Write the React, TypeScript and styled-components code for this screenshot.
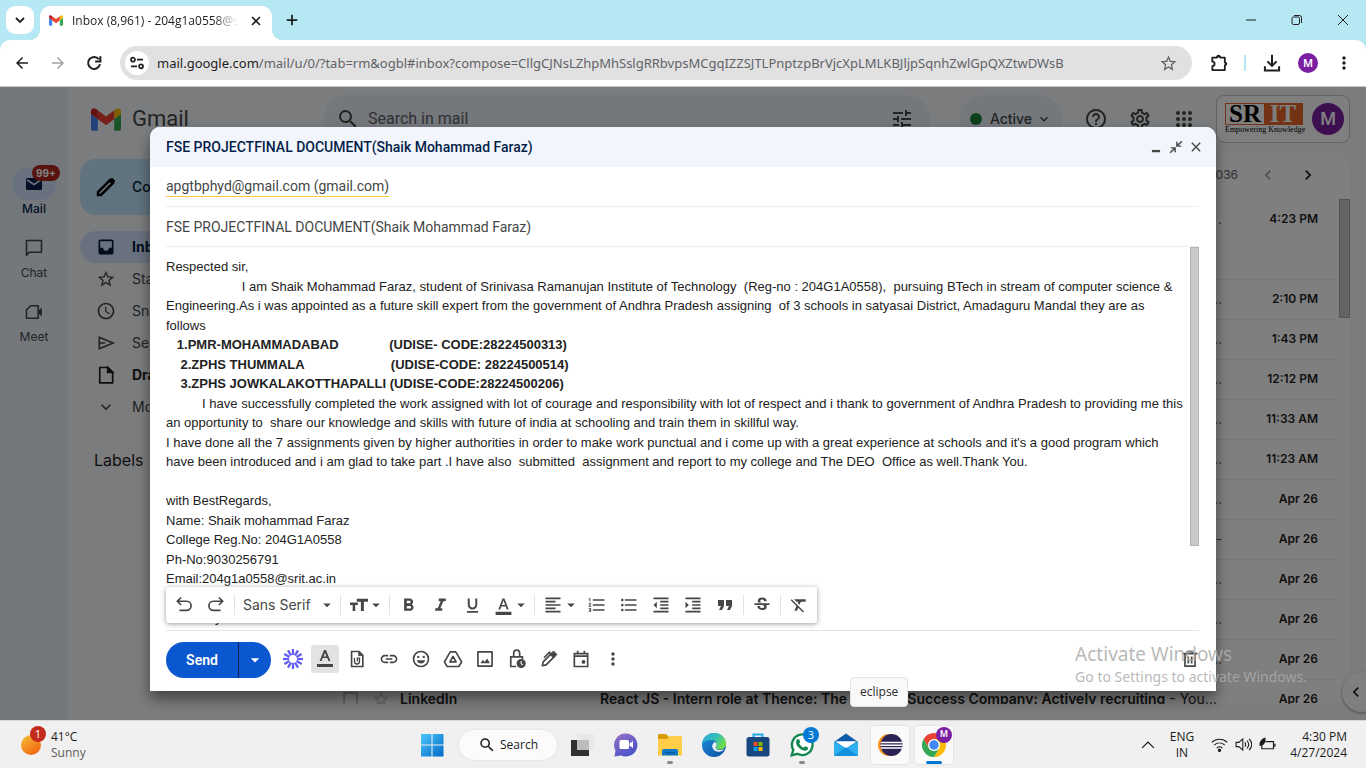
import React from "react";
import styled, { createGlobalStyle, css } from "styled-components";
import {
  MdAccessTime,
  MdArrowBack,
  MdArrowDropDown,
  MdArrowForward,
  MdChevronLeft,
  MdChevronRight,
  MdClose,
  MdExpandMore,
  MdFormatAlignLeft,
  MdFormatBold,
  MdFormatClear,
  MdFormatColorText,
  MdFormatIndentDecrease,
  MdFormatIndentIncrease,
  MdFormatItalic,
  MdFormatListBulleted,
  MdFormatListNumbered,
  MdFormatQuote,
  MdFormatUnderlined,
  MdHelpOutline,
  MdInsertLink,
  MdMoreVert,
  MdOutlineSettings,
  MdRefresh,
  MdSearch,
  MdStarBorder,
  MdStrikethroughS,
  MdTune,
} from "react-icons/md";

const google = `Inter, Roboto, "Liberation Sans", sans-serif`;
const product = `Roboto, "Liberation Sans", sans-serif`;
const system = `"Open Sans", "Noto Sans", sans-serif`;
const systemWide = `"Noto Sans", "Open Sans", sans-serif`;

const Global = createGlobalStyle`
  *, *::before, *::after { box-sizing: border-box; }
  body { margin: 0; font-family: ${product}; }
  button, input, select { font: inherit; color: inherit; }
  svg { display: block; flex: none; }
`;

const Screen = styled.div`
  position: relative;
  display: flex;
  flex-direction: column;
  height: 100vh;
  overflow: hidden;
  background: #b5e8f2;
`;

/* ---------- browser chrome ---------- */

const plainButton = css`
  display: flex;
  align-items: center;
  justify-content: center;
  flex: none;
  padding: 0;
  border: 0;
  background: none;
`;

const TabStrip = styled.header`
  display: flex;
  height: 40px;
  padding-left: 6px;
  font: 12px/16px ${system};
  color: #1f1f1f;
`;

const TabSearch = styled.button`
  ${plainButton}
  width: 28px;
  height: 28px;
  margin-top: 6px;
  border-radius: 9px;
  background: #fff;
`;

const Tab = styled.div`
  position: relative;
  display: flex;
  align-items: center;
  width: 232px;
  height: 34px;
  margin: 6px 0 0 6px;
  padding: 0 6px 5px 9px;
  border-radius: 10px 10px 0 0;
  background: #fff;
  &::before,
  &::after {
    content: "";
    position: absolute;
    bottom: 0;
    width: 10px;
    height: 10px;
  }
  &::before {
    left: -10px;
    background: radial-gradient(circle at 0 0, transparent 10px, #fff 10px);
  }
  &::after {
    right: -10px;
    background: radial-gradient(circle at 100% 0, transparent 10px, #fff 10px);
  }
`;

const TabTitle = styled.span`
  flex: 1;
  min-width: 0;
  margin: 0 8px 0 9px;
  overflow: hidden;
  white-space: nowrap;
  mask-image: linear-gradient(90deg, #000 86%, transparent);
`;

const TabButton = styled.button`
  ${plainButton}
  width: 20px;
  height: 28px;
`;

const NewTab = styled.button`
  ${plainButton}
  width: 28px;
  height: 28px;
  margin: 6px 0 0 6px;
`;

const WindowControls = styled.div`
  display: flex;
  margin-left: auto;
`;

const WindowButton = styled.button`
  ${plainButton}
  width: 46px;
  height: 40px;
`;

const AddressRow = styled.div`
  display: flex;
  align-items: center;
  height: 47px;
  padding: 0 4px 0 8px;
  border-bottom: 1px solid #c4c8cb;
  border-radius: 10px 10px 0 0;
  background: #fff;
  color: #1f1f1f;
`;

const ChromeButton = styled.button<{ $dim?: boolean; $w?: number }>`
  ${plainButton}
  width: ${(p) => p.$w ?? 36}px;
  height: 34px;
  color: ${(p) => (p.$dim ? "#a3a3a3" : "#1f1f1f")};
`;

const AddressBox = styled.div`
  display: flex;
  flex: 1;
  align-items: center;
  min-width: 0;
  height: 34px;
  margin: 0 9px 0 12px;
  padding: 0 13px 0 5px;
  border-radius: 17px;
  background: #e1e1e1;
  color: #5f6368;
  font: 13px/20px ${systemWide};
`;

const SiteInfo = styled.button`
  ${plainButton}
  width: 24px;
  height: 24px;
  border-radius: 12px;
  background: #fff;
  color: #1f1f1f;
`;

const Url = styled.span`
  flex: 1;
  min-width: 0;
  margin-left: 8px;
  overflow: hidden;
  white-space: nowrap;
  b {
    font-weight: 400;
    color: #1f1f1f;
  }
`;

const Divider = styled.span`
  width: 2px;
  height: 16px;
  margin: 0 8px 0 7px;
  background: #b5e8f2;
`;

const Avatar = styled.span<{ $size: number }>`
  display: flex;
  align-items: center;
  justify-content: center;
  flex: none;
  width: ${(p) => p.$size}px;
  height: ${(p) => p.$size}px;
  border-radius: 50%;
  background: #7b1fa2;
  color: #fff;
  font: 500 ${(p) => (p.$size > 24 ? 18 : p.$size > 17 ? 11 : 9)}px/1 ${product};
`;

/* ---------- mail app behind the dialog ---------- */

const MailApp = styled.main`
  position: relative;
  display: flex;
  flex: 1;
  min-height: 0;
  overflow: hidden;
  background: #f6f8fc;
  color: #444746;
`;

const Rail = styled.nav`
  width: 68px;
  flex: none;
  padding-top: 81px;
  background: #e9eef6;
`;

const RailItem = styled.a<{ $active?: boolean }>`
  position: relative;
  display: flex;
  flex-direction: column;
  align-items: center;
  height: 64px;
  color: ${(p) => (p.$active ? "#041e49" : "#444746")};
  font: ${(p) => (p.$active ? 500 : 400)} 12px/18px ${google};
  text-decoration: none;
`;

const RailChip = styled.span<{ $active?: boolean }>`
  display: flex;
  align-items: center;
  justify-content: center;
  width: 44px;
  height: 32px;
  border-radius: 16px;
  background: ${(p) => (p.$active ? "#d3e3fd" : "none")};
`;

const RailBadge = styled.span`
  position: absolute;
  top: -3px;
  left: 32px;
  padding: 0 4px;
  border-radius: 8px;
  background: #b3261e;
  color: #fff;
  font: 700 10px/16px ${google};
`;

const Content = styled.div`
  display: flex;
  flex: 1;
  flex-direction: column;
  min-width: 0;
`;

const TopBar = styled.div`
  display: flex;
  align-items: center;
  height: 64px;
  flex: none;
  padding-right: 16px;
`;

const Brand = styled.a`
  display: flex;
  align-items: center;
  gap: 11px;
  width: 256px;
  flex: none;
  padding-left: 23px;
  color: #444746;
  font: 22px/28px ${product};
  text-decoration: none;
`;

const SearchBox = styled.label`
  display: flex;
  flex: 1;
  align-items: center;
  gap: 8px;
  height: 48px;
  margin-right: 30px;
  padding: 0 16px 0 12px;
  border-radius: 24px;
  background: #e9eef6;
  input {
    flex: 1;
    min-width: 0;
    padding: 0;
    border: 0;
    background: none;
    font: 16px/24px ${product};
    outline: 0;
  }
  input::placeholder {
    color: #5f6368;
    opacity: 1;
  }
`;

const StatusButton = styled.button`
  ${plainButton}
  gap: 4px;
  width: 102px;
  height: 48px;
  border-radius: 24px;
  background: #e9eef6;
  font: 500 14px/24px ${google};
  &::before {
    content: "";
    width: 12px;
    height: 12px;
    margin-right: 4px;
    border-radius: 50%;
    background: #188038;
  }
`;

const TopIcons = styled.div`
  display: flex;
  gap: 4px;
  margin: 0 12px 0 14px;
`;

const IconButton = styled.button<{ $w?: number }>`
  ${plainButton}
  width: ${(p) => p.$w ?? 40}px;
  height: ${(p) => p.$w ?? 40}px;
`;

const Account = styled.div`
  display: flex;
  align-items: center;
  justify-content: space-between;
  width: 134px;
  height: 48px;
  padding: 0 5px 0 8px;
  border: 1px solid #c4c7c5;
  border-radius: 8px;
  background: #fff;
`;

const School = styled.div`
  width: 78px;
  color: #000;
  font: 400 8px/10px "Liberation Serif", serif;
  text-align: center;
  white-space: nowrap;
`;

const SchoolName = styled.div`
  display: flex;
  height: 22px;
  border: 1px solid #e8642a;
  font: 700 25px/20px "Liberation Serif", serif;
  span {
    flex: 1;
  }
  span:last-child {
    background: #e8642a;
    color: #fff;
  }
`;

const Columns = styled.div`
  display: flex;
  flex: 1;
  min-height: 0;
  padding: 0 16px 16px 0;
`;

const Sidebar = styled.nav`
  width: 264px;
  flex: none;
  padding: 8px 8px 0 12px;
`;

const Compose = styled.button`
  ${plainButton}
  gap: 14px;
  height: 56px;
  margin-bottom: 16px;
  padding: 0 24px 0 14px;
  border-radius: 16px;
  background: #c2e7ff;
  color: #001d35;
  font: 500 14px/20px ${google};
  svg {
    color: #000;
  }
`;

const Folder = styled.a<{ $active?: boolean; $bold?: boolean }>`
  display: flex;
  align-items: center;
  gap: 16px;
  height: 32px;
  padding-left: 16px;
  border-radius: 16px;
  background: ${(p) => (p.$active ? "#d3e3fd" : "none")};
  color: ${(p) => (p.$active ? "#001d35" : p.$bold ? "#1f1f1f" : "#444746")};
  font: ${(p) => (p.$active || p.$bold ? 700 : 400)} 14px/20px ${google};
  text-decoration: none;
`;

const LabelsTitle = styled.h2`
  margin: 25px 0 0 14px;
  color: #1f1f1f;
  font: 400 16px/24px ${google};
`;

const ListPanel = styled.section`
  display: flex;
  flex: 1;
  flex-direction: column;
  min-width: 0;
  overflow: hidden;
  border-radius: 16px;
  background: #fff;
`;

const ListBar = styled.div`
  display: flex;
  align-items: center;
  justify-content: flex-end;
  height: 48px;
  flex: none;
  padding-right: 22px;
  color: #5e5e5e;
  font: 12px/16px ${google};
`;

const Range = styled.span`
  margin-right: 10px;
`;

const ListBody = styled.div`
  display: flex;
  min-height: 0;
`;

const MailTable = styled.table`
  flex: 1;
  width: 100%;
  table-layout: fixed;
  border-collapse: collapse;
  color: #1f1f1f;
  font: 14px/20px ${google};
  b {
    font-weight: 600;
  }
`;

const MailRow = styled.tr<{ $tall?: boolean }>`
  height: ${(p) => (p.$tall ? 80 : 40)}px;
  border-bottom: 1px solid #eceff1;
  vertical-align: ${(p) => (p.$tall ? "top" : "middle")};
`;

const Cell = styled.td`
  padding: 0;
  overflow: hidden;
  text-overflow: ellipsis;
  white-space: nowrap;
  input {
    display: block;
    appearance: none;
    width: 15px;
    height: 15px;
    margin: 0 0 0 11px;
    border: 2px solid #c4c7c5;
    border-radius: 2px;
  }
  svg {
    color: #c4c7c5;
  }
`;

const More = styled.td<{ $tall?: boolean }>`
  padding: ${(p) => (p.$tall ? "10px 0" : "0")};
  color: #5f6368;
  text-align: right;
`;

const Time = styled.td<{ $tall?: boolean }>`
  padding: ${(p) => (p.$tall ? "10px 16px 10px 0" : "0 16px 0 0")};
  font-size: 12px;
  font-weight: 600;
  text-align: right;
`;

const ListThumb = styled.div`
  width: 11px;
  height: 119px;
  margin-left: 5px;
  border: 1px solid #a8a8a8;
  background: #c8c8c8;
`;

const PanelToggle = styled.button`
  ${plainButton}
  position: absolute;
  right: -16px;
  bottom: 8px;
  width: 40px;
  height: 40px;
  padding-right: 12px;
  border-radius: 20px;
  background: #fff;
  box-shadow: 0 1px 3px rgba(0, 0, 0, 0.4);
  color: #1f1f1f;
`;

const Scrim = styled.div`
  position: absolute;
  inset: 0;
  display: flex;
  padding: 40px 150px 29px;
  background: rgba(0, 0, 0, 0.5);
`;

/* ---------- compose dialog ---------- */

const Dialog = styled.section`
  display: flex;
  flex: 1;
  flex-direction: column;
  min-width: 0;
  border-radius: 10px 10px 0 0;
  background: #fff;
  box-shadow: 0 8px 14px rgba(0, 0, 0, 0.45);
  color: #222;
`;

const DialogHeader = styled.header`
  display: flex;
  align-items: center;
  justify-content: space-between;
  height: 40px;
  flex: none;
  padding: 0 10px 0 16px;
  border-radius: 10px 10px 0 0;
  background: #f2f6fc;
  color: #041e49;
  h1 {
    margin: 0;
    font: 500 14px/20px ${product};
  }
`;

const HeaderButtons = styled.div`
  display: flex;
  color: #444746;
`;

const Fields = styled.div`
  display: flex;
  flex: 1;
  flex-direction: column;
  min-height: 0;
  padding: 0 17px 0 16px;
`;

const Field = styled.div`
  display: flex;
  align-items: center;
  height: 40px;
  flex: none;
  border-bottom: 1px solid #eceff1;
  color: #444746;
  font: 14px/20px ${product};
  input {
    flex: 1;
    padding: 0;
    border: 0;
    outline: 0;
  }
`;

const Recipient = styled.span`
  border-bottom: 1px solid #fbc934;
`;

const Editor = styled.div`
  position: relative;
  display: flex;
  flex: 1;
  min-height: 0;
  justify-content: space-between;
`;

const Message = styled.div`
  flex: 1;
  min-width: 0;
  padding-top: 10px;
  overflow: hidden;
  color: #222;
  font: 13px/1.5 "Liberation Sans", Arial, sans-serif;
  outline: 0;
  p {
    margin: 0;
    white-space: pre;
  }
`;

const EditorThumb = styled.div`
  width: 9px;
  height: 299px;
  flex: none;
  border: 1px solid #b4b4b4;
  background: #c9c9c9;
`;

const FormatBar = styled.div`
  position: absolute;
  bottom: 7px;
  left: 0;
  display: flex;
  align-items: center;
  gap: 4px;
  height: 36px;
  padding: 0 4px;
  border-radius: 3px;
  background: #fff;
  box-shadow: 0 1px 5px rgba(0, 0, 0, 0.4);
  color: #444746;
`;

const Tool = styled.button<{ $wide?: boolean; $on?: boolean }>`
  ${plainButton}
  width: ${(p) => (p.$wide ? 40 : 28)}px;
  height: 28px;
  border-radius: 3px;
  background: ${(p) => (p.$on ? "#e3e3e3" : "none")};
  color: #444746;
  svg + svg {
    margin: 0 -4px 0 -1px;
  }
`;

const Separator = styled.span`
  width: 1px;
  height: 20px;
  background: #dfe1e5;
`;

const FontPicker = styled.label`
  position: relative;
  display: flex;
  align-items: center;
  width: 97px;
  height: 28px;
  select {
    width: 100%;
    padding: 0 4px;
    border: 0;
    appearance: none;
    background: none;
    font: 400 14px/20px ${google};
  }
  svg {
    position: absolute;
    right: 0;
    pointer-events: none;
  }
`;

const Footer = styled.footer`
  display: flex;
  align-items: center;
  height: 61px;
  flex: none;
  padding-bottom: 2px;
  border-top: 1px solid #e4e4e4;
  color: #444746;
`;

const SendGroup = styled.div`
  display: flex;
  height: 36px;
  margin-right: 8px;
  overflow: hidden;
  border-radius: 18px;
  background: #0b57d0;
  color: #fff;
`;

const SendButton = styled.button<{ $w: number }>`
  ${plainButton}
  width: ${(p) => p.$w}px;
  font: 600 14px/20px ${product};
  & + & {
    border-left: 1px solid #041e49;
  }
`;

const Tools = styled.div`
  display: flex;
  flex: 1;
  gap: 4px;
  padding-bottom: 2px;
  > :last-child {
    margin: 0 -5px 0 auto;
  }
`;

/* ---------- desktop ---------- */

const Taskbar = styled.footer`
  display: grid;
  grid-template-columns: 1fr auto 1fr;
  align-items: center;
  height: 48px;
  flex: none;
  border-top: 1px solid #d8d8d8;
  background: #f0f0f0;
  color: #1b1b1b;
  font: 12px/16px ${system};
`;

const Weather = styled.button`
  ${plainButton}
  position: relative;
  justify-self: start;
  gap: 9px;
  padding-left: 20px;
  text-align: left;
  small {
    display: block;
    color: #5c5c5c;
    font-size: 12px;
  }
`;

const Count = styled.span<{ $color: string; $x: number; $y: number }>`
  position: absolute;
  top: ${(p) => p.$y}px;
  left: ${(p) => p.$x}px;
  width: 16px;
  height: 16px;
  border-radius: 8px;
  background: ${(p) => p.$color};
  color: #fff;
  font: 11px/16px ${system};
  text-align: center;
`;

const Apps = styled.div`
  display: flex;
  align-items: center;
`;

const AppButton = styled.button<{ $open?: boolean; $tile?: boolean }>`
  ${plainButton}
  position: relative;
  width: 38px;
  height: 38px;
  margin: 0 3px;
  border-radius: 4px;
  background: ${(p) => (p.$tile ? "#fafafa" : "none")};
  box-shadow: ${(p) => (p.$tile ? "0 0 1px 1px #e4e4e4" : "none")};
  &::after {
    content: "";
    position: absolute;
    bottom: 0;
    display: ${(p) => (p.$open ? "block" : "none")};
    width: ${(p) => (p.$tile ? 16 : 6)}px;
    height: 3px;
    border-radius: 2px;
    background: ${(p) => (p.$tile ? "#0078d4" : "#8a8a8a")};
  }
`;

const TaskSearch = styled.button`
  ${plainButton}
  gap: 4px;
  width: 98px;
  height: 30px;
  margin: 0 3px 0 5px;
  border-radius: 15px;
  background: #fbfbfb;
  box-shadow: 0 0 1px 1px #e6e6e6;
`;

const ProfileBadge = styled.span`
  position: absolute;
  top: 1px;
  right: 1px;
`;

const Tray = styled.div`
  display: flex;
  align-items: center;
  justify-self: end;
  padding-right: 19px;
`;

const TrayText = styled.div<{ $right?: boolean }>`
  margin-left: ${(p) => (p.$right ? 14 : 15)}px;
  text-align: ${(p) => (p.$right ? "right" : "center")};
`;

const TrayIcons = styled.div`
  display: flex;
  gap: 7px;
  margin-left: 17px;
`;

const Tip = styled.div`
  position: absolute;
  bottom: 61px;
  left: 850px;
  padding: 6px 9px;
  border: 1px solid #e2e2e2;
  border-radius: 4px;
  background: #f9f9f9;
  color: #2b2b2b;
  font: 12px/16px ${system};
`;

const Watermark = styled.div`
  position: absolute;
  right: 59px;
  bottom: 81px;
  color: rgba(172, 172, 172, 0.85);
  font: 14px/20px ${systemWide};
  pointer-events: none;
  strong {
    display: block;
    font: 19px/26px ${systemWide};
  }
`;

/* ---------- drawings ---------- */

type IconProps = { size?: number; children: React.ReactNode; w?: number };

const Line = ({ size = 20, w = 2, children }: IconProps) => (
  <svg
    width={size}
    height={size}
    viewBox="0 0 24 24"
    fill="none"
    stroke="currentColor"
    strokeWidth={w}
    aria-hidden
  >
    {children}
  </svg>
);

const GmailLogo = ({ width }: { width: number }) => (
  <svg width={width} height={Math.round(width * 0.76)} viewBox="52 42 88 66" aria-hidden>
    <path fill="#4285f4" d="M58 108h14V74L52 59v43c0 3.32 2.69 6 6 6" />
    <path fill="#34a853" d="M120 108h14c3.32 0 6-2.69 6-6V59l-20 15" />
    <path fill="#fbbc04" d="M120 48v26l20-15v-8c0-7.42-8.47-11.65-14.4-7.2" />
    <path fill="#ea4335" d="M72 74V48l24 18 24-18v26L96 92" />
    <path fill="#c5221f" d="M52 51v8l20 15V48l-5.6-4.2c-5.94-4.45-14.4-.22-14.4 7.2" />
  </svg>
);

const AppGrid = () => (
  <svg width="18" height="18" viewBox="0 0 18 18" fill="currentColor" aria-hidden>
    {[3, 9, 15].map((y) => [3, 9, 15].map((x) => <circle key={`${x}-${y}`} cx={x} cy={y} r="2" />))}
  </svg>
);
const Undo = () => (
  <Line>
    <path d="M8.500 3 4 7.500l4.500 4.500M4 7.500h11a5 5 0 0 1 0 11H6.500" />
  </Line>
);
const Redo = () => (
  <Line>
    <path d="M15.500 3 20 7.500 15.500 12M20 7.500H9a5 5 0 0 0 0 11h8.500" />
  </Line>
);
const TextSize = () => (
  <svg width="18" height="18" viewBox="0 0 24 24" fill="currentColor" aria-hidden>
    <path d="M9 3.500v4h5.500V20h4V7.500H24v-4zM0 12h3.500v8h3.500v-8h3.500V8.500H0z" />
  </svg>
);
const Burst = () => (
  <svg width="20" height="20" viewBox="-10 -10 20 20" stroke="#625df5" strokeWidth="2.300" aria-hidden>
    {[0, 30, 60, 90, 120, 150, 180, 210, 240, 270, 300, 330].map((a) => (
      <path key={a} d="M0-4V-10" transform={`rotate(${a})`} />
    ))}
  </svg>
);
const TextFormat = () => (
  <svg width="20" height="20" viewBox="0 0 20 20" fill="currentColor" aria-hidden>
    <path d="M9 1h2l4.400 11h-2l-1.100-2.900H7.700L6.600 12h-2zm-.300 6.500h2.600L10 3.500z" />
    <path d="M2 15h16v3H2z" />
  </svg>
);
const AttachDoc = () => (
  <Line>
    <path d="M5.500 3h9L19 7.500V21h-13.500z" />
    <path d="M14 3v5h5z" fill="currentColor" strokeWidth="1" />
    <path d="M9 10.500v4.500a3 3 0 0 0 6 0v-4h-2.500v4" strokeWidth="1.600" />
  </Line>
);
const Smile = () => (
  <Line>
    <circle cx="12" cy="12" r="9" />
    <circle cx="8.700" cy="9.500" r="1.400" fill="currentColor" stroke="none" />
    <circle cx="15.300" cy="9.500" r="1.400" fill="currentColor" stroke="none" />
    <path d="M7 13.500h10c-.7 2.500-2.700 4-5 4s-4.300-1.500-5-4z" fill="currentColor" stroke="none" />
  </Line>
);
const DriveMark = () => (
  <Line>
    <path d="M8.700 3.500h6.600l7 12-3.300 5.500H5l-3.300-5.500z" strokeLinejoin="round" />
    <path d="m12 9-3.700 6.500h7.400z" strokeLinejoin="round" />
  </Line>
);
const Picture = () => (
  <Line>
    <path d="M3.500 3.500h17v17h-17z" strokeLinejoin="round" />
    <path d="m6.500 17 3-4 2 2.500 3-4 3.500 5.500z" fill="currentColor" stroke="none" />
  </Line>
);
const LockClock = () => (
  <Line>
    <path d="M11 21H4.500V9.500h14V12M8 9.500V5a3.600 3.600 0 0 1 7.200 0v4.500" />
    <circle cx="17" cy="17.500" r="5.500" fill="currentColor" stroke="none" />
    <path d="M17 14.500v3l1.800 1.800" stroke="#fff" strokeWidth="1.300" />
  </Line>
);
const Pen = () => (
  <Line>
    <path d="M4 20l1-4.500L14 6.500l3.500 3.500-9 9z" strokeLinejoin="round" />
    <path d="m13.500 6 4-3.500L21.500 6.500 18 10.500z" fill="currentColor" strokeWidth="1" />
    <path d="M14.500 6.500 12.500 4 6 10.500" />
  </Line>
);
const Event = () => (
  <Line>
    <path d="M4 5.500h16v15.500H4zM4 8.500h16M8 2v4M16 2v4" />
    <circle cx="15" cy="15.500" r="2.300" fill="currentColor" stroke="none" />
  </Line>
);
const Trash = () => (
  <Line>
    <path d="M6 6.500V20.500h12V6.500M3 5.500h18M9 4.500V3h6v1.500M10 9v8.500M14 9v8.500" />
  </Line>
);
const Collapse = () => (
  <Line size={14} w={2.500}>
    <path d="M22 2l-7 7M13.500 3v7.500H21M2 22l7-7M10.500 21v-7.500H3" />
  </Line>
);
const MailIcon = () => (
  <svg width="16" height="12" viewBox="0 0 16 12" aria-hidden>
    <rect width="16" height="12" rx="1.500" fill="#041e49" />
    <path d="m1 2 7 4.500L15 2" fill="none" stroke="#d3e3fd" strokeWidth="1.500" />
  </svg>
);
const Chat = () => (
  <Line size={20} w={1.900}>
    <path d="M3 3h18v14H6.500L3 20.500z" strokeLinejoin="round" />
  </Line>
);
const Meet = () => (
  <Line size={20} w={1.900}>
    <path d="M8 4.500h9v15H3v-10z" strokeLinejoin="round" />
    <path d="M17 11l4-3.500v9L17 13z" fill="currentColor" strokeWidth="1" />
  </Line>
);
const Pencil = () => (
  <Line size={24} w={2.500}>
    <path d="M4 20v-3L16 5l3 3L7 20z" />
    <path d="m15 6 3-3 3 3-3 3z" fill="currentColor" strokeWidth="1" />
  </Line>
);
const InboxIcon = () => (
  <svg width="20" height="20" viewBox="0 0 24 24" fill="currentColor" aria-hidden>
    <path
      fillRule="evenodd"
      d="M5 3h14a2 2 0 0 1 2 2v14a2 2 0 0 1-2 2H5a2 2 0 0 1-2-2V5c0-1.100.9-2 2-2m0 2v8h3.500a3.500 3.500 0 0 0 7 0H19V5z"
    />
  </svg>
);
const Sent = () => (
  <Line>
    <path d="M4 5v14l16.500-7zM4 12h7" />
  </Line>
);
const Draft = () => (
  <Line>
    <path d="M4.500 3h10L20 8.500V21.500H4.500z" strokeLinejoin="round" />
    <path d="M14 3v6h6z" fill="currentColor" />
  </Line>
);
const SiteSettings = () => (
  <Line size={16} w={2.600}>
    <circle cx="6" cy="7" r="3" />
    <path d="M12 7h9M3 17h9" />
    <circle cx="18" cy="17" r="3" />
  </Line>
);
const Reload = () => (
  <Line size={18} w={2.700}>
    <path d="M18.500 7A8 8 0 1 0 20 13.500M20.500 3v7h-7" />
  </Line>
);
const Puzzle = () => (
  <Line size={20} w={2.200}>
    <path
      d="M4 5.500h5.500a2 2 0 0 1 4 0H19v5.500a2.300 2.300 0 0 1 0 4V20.500H4v-4.800a2.700 2.700 0 0 0 0-5.400z"
      strokeLinejoin="round"
    />
    <path d="M9.500 5.500V4a2 2 0 0 1 4 0v1.500zM19 11h1a2 2 0 0 1 0 4h-1z" fill="currentColor" stroke="none" />
  </Line>
);
const Download = () => (
  <Line size={20} w={2.400}>
    <path d="M12 2v13M6.500 10l5.500 5.500 5.500-5.500M3.500 16v5h17v-5" />
  </Line>
);
const Wifi = () => (
  <Line size={17} w={1.500}>
    <path d="M1 9c6.500-6 15.500-6 22 0M4.500 13c4.500-4.200 10.500-4.200 15 0M8 17c2.500-2.200 5.500-2.200 8 0" />
    <circle cx="12" cy="20" r="1.700" fill="currentColor" />
  </Line>
);
const Volume = () => (
  <Line size={17} w={1.500}>
    <path d="M1.500 9h4L11 4v16l-5.500-5h-4zM14 9c1.500 2 1.500 4 0 6M17 6.500c3 3.500 3 7.500 0 11M20 4c4.500 5 4.500 11 0 16" />
  </Line>
);
const Battery = () => (
  <Line size={17} w={1.700}>
    <path d="M9 8h11.500v10H4v-5M22.500 11v4" />
    <path d="M1 14C0 8 3 4 9 2c1 6-1 11-7 12zM2 17l4-6" fill="currentColor" stroke="none" />
  </Line>
);

const StartLogo = () => (
  <svg width="24" height="24" viewBox="0 0 24 24" aria-hidden>
    <defs>
      <linearGradient id="start" x2="1" y2="1">
        <stop offset="0" stopColor="#4cc8fa" />
        <stop offset="1" stopColor="#0067c8" />
      </linearGradient>
    </defs>
    <path fill="url(#start)" d="M1 1h10.500v10.500H1zM12.500 1H23.500v10.500h-11zM1 12.500h10.500V23.500H1zM12.500 12.500H23.500V23.500h-11z" />
  </svg>
);
const TaskView = () => (
  <svg width="26" height="24" viewBox="0 0 26 24" aria-hidden>
    <path fill="#303030" d="M2 7h18v16H2z" />
    <path fill="#e8e8e8" d="M8 1h17v16h-5V7H8z" />
    <path fill="#bdbdbd" d="M8 7h12v10H8z" />
  </svg>
);
const TeamsChat = () => (
  <svg width="26" height="26" viewBox="0 0 26 26" aria-hidden>
    <defs>
      <linearGradient id="teams" x2=".6" y2="1">
        <stop offset="0" stopColor="#9a73c4" />
        <stop offset="1" stopColor="#4a52c9" />
      </linearGradient>
    </defs>
    <path fill="url(#teams)" d="M13 1.500a11.500 11.500 0 1 1-5 21.900L1.500 24.500l1-6A11.500 11.500 0 0 1 13 1.500" />
    <rect x="6.500" y="8" width="9.500" height="9" rx="1.500" fill="#fff" />
    <path d="m16.500 11.500 3.500-2.500v7l-3.500-2.500z" fill="#fff" />
  </svg>
);
const Folders = () => (
  <svg width="26" height="24" viewBox="0 0 26 24" aria-hidden>
    <path fill="#d99a00" d="M1 2.500A1.500 1.500 0 0 1 2.500 1H9l3 3-2 4H1z" />
    <path fill="#ffcd47" d="M1 6h9l3-3h10.500A1.500 1.500 0 0 1 25 4.500V22.500H1z" />
    <path fill="#0a78c8" d="M5 22.500V18a2 2 0 0 1 2-2h12a2 2 0 0 1 2 2v4.500z" />
    <path fill="#075a9e" d="M8 19h10v1.500H8z" />
  </svg>
);
const EdgeLogo = () => (
  <svg width="26" height="26" viewBox="0 0 26 26" aria-hidden>
    <defs>
      <linearGradient id="edgeTop" x2="1" y2=".5">
        <stop offset="0" stopColor="#2aa7e0" />
        <stop offset=".6" stopColor="#35c1b0" />
        <stop offset="1" stopColor="#6fdc4a" />
      </linearGradient>
      <linearGradient id="edgeLow" x2="1" y2="1">
        <stop offset="0" stopColor="#1b8fe0" />
        <stop offset="1" stopColor="#0c4f9e" />
      </linearGradient>
    </defs>
    <circle cx="13" cy="13" r="12" fill="url(#edgeLow)" />
    <path fill="url(#edgeTop)" d="M1 12C2 5 7 1 13 1c7 0 12 5 12 10.500 0 4-3 6-6.500 6-2.500 0-4-.8-4-1.800 0-.8 1.300-1.300 1.300-3.200 0-2.500-2.300-4.500-5.800-4.500C6 8 2.500 9.500 1 12" />
    <path fill="#f0f0f0" d="M15.800 11.800c0 2.200-1.800 3-1 4.700.8 1.600 5.200 2.500 9 .2-2 3-8 4.300-11 1-2.400-2.500-1.800-6 1-7.700z" />
  </svg>
);
const Store = () => (
  <svg width="26" height="26" viewBox="0 0 26 26" aria-hidden>
    <path d="M8.500 6V2.500h9V6" fill="none" stroke="#22a9ea" strokeWidth="2" />
    <rect x="1.500" y="5" width="23" height="19.500" rx="2.500" fill="#17477e" />
    <path fill="#f25022" d="M8.500 10h4v4h-4z" />
    <path fill="#7fba00" d="M13.500 10h4v4h-4z" />
    <path fill="#00a4ef" d="M8.500 15h4v4h-4z" />
    <path fill="#ffb900" d="M13.500 15h4v4h-4z" />
  </svg>
);
const WhatsApp = () => (
  <svg width="26" height="26" viewBox="0 0 24 24" aria-hidden>
    <path d="M2.500 21.500 4 16.500a9.500 9.500 0 1 1 3.700 3.600z" fill="#fff" stroke="#14894f" strokeWidth="2.200" />
    <path
      fill="#14894f"
      d="M8.500 6.500c.5 0 .8.200 1 .7l.7 1.700c.2.500-.8 1.300-.8 1.700 1 1.800 2.300 3 4.200 3.800.5 0 1.200-1.300 1.700-1.200l2 1c.5.300.4 2-.8 2.700-2.700 1.500-7.300-1.500-9-4.200C6 10 6.300 7 8.500 6.500"
    />
  </svg>
);
const MailTile = () => (
  <svg width="26" height="26" viewBox="0 0 26 26" aria-hidden>
    <path fill="#0f5aa8" d="M1 10 13 1.500 25 10v5H1z" />
    <path fill="#fff" d="M3.500 9.500h19L13 17z" />
    <path fill="#2fb0ee" d="M1 9.500 13 16l12-6.500V24H1z" />
    <path fill="#1690dc" d="m1 24 12-9 12 9z" />
    <path fill="#fff" d="M2 9.500h22L13 15.700z" />
  </svg>
);
const Eclipse = () => (
  <svg width="26" height="26" viewBox="0 0 26 26" aria-hidden>
    <circle cx="12" cy="13" r="11" fill="#f7941e" />
    <circle cx="14.500" cy="13" r="11" fill="#2c2255" />
    <path stroke="#fff" strokeWidth="1.600" d="M4 10.500h21M3.500 13.200h22M4 16h21" />
  </svg>
);
const Chrome = () => (
  <svg width="26" height="26" viewBox="-13 -13 26 26" aria-hidden>
    <path fill="#ea4335" d="M-10.400-6A12 12 0 0 1 10.400-6H0L-5.200 3z" />
    <path fill="#fbbc04" d="M10.400-6A12 12 0 0 1 0 12L5.200 3 0-6z" />
    <path fill="#34a853" d="M0 12A12 12 0 0 1-10.400-6L-5.200 3 0 6l5.200-3z" />
    <circle r="6" fill="#fff" />
    <circle r="4.700" fill="#4285f4" />
  </svg>
);

/* ---------- content ---------- */

const rows = [
  { time: "4:23 PM", more: ".", tall: true },
  { time: "2:10 PM", more: ".." },
  { time: "1:43 PM", more: ".." },
  { time: "12:12 PM", more: ".." },
  { time: "11:33 AM", more: ".." },
  { time: "11:23 AM", more: ".." },
  { time: "Apr 26", more: ".." },
  { time: "Apr 26", more: "-" },
  { time: "Apr 26", more: ".." },
  { time: "Apr 26", more: ".." },
  { time: "Apr 26", more: ".." },
];

const sp = (n: number) => " ".repeat(n);

const message: { text: string; bold?: boolean }[] = [
  { text: "Respected sir," },
  {
    text:
      sp(21) +
      "I am Shaik Mohammad Faraz, student of Srinivasa Ramanujan Institute of Technology  (Reg-no : 204G1A0558),  pursuing BTech in stream of computer science &",
  },
  {
    text:
      "Engineering.As i was appointed as a future skill expert from the government of Andhra Pradesh assigning  of 3 schools in satyasai District, Amadaguru Mandal they are as",
  },
  { text: "follows" },
  { text: sp(3) + "1.PMR-MOHAMMADABAD" + sp(14) + "(UDISE- CODE:28224500313)", bold: true },
  { text: sp(4) + "2.ZPHS THUMMALA" + sp(24) + "(UDISE-CODE: 28224500514)", bold: true },
  { text: sp(4) + "3.ZPHS JOWKALAKOTTHAPALLI (UDISE-CODE:28224500206)", bold: true },
  {
    text:
      sp(10) +
      "I have successfully completed the work assigned with lot of courage and responsibility with lot of respect and i thank to government of Andhra Pradesh to providing me this",
  },
  { text: "an opportunity to  share our knowledge and skills with future of india at schooling and train them in skillful way." },
  {
    text:
      "I have done all the 7 assignments given by higher authorities in order to make work punctual and i come up with a great experience at schools and it's a good program which",
  },
  {
    text:
      "have been introduced and i am glad to take part .I have also  submitted  assignment and report to my college and The DEO  Office as well.Thank You.",
  },
  { text: " " },
  { text: "with BestRegards," },
  { text: "Name: Shaik mohammad Faraz" },
  { text: "College Reg.No: 204G1A0558" },
  { text: "Ph-No:9030256791" },
  { text: "Email:204g1a0558@srit.ac.in" },
  { text: " " },
  { text: "Dist: Satyasai" },
];

export default function App() {
  return (
    <Screen>
      <Global />
      <TabStrip>
        <TabSearch aria-label="Search tabs">
          <Line size={12} w={3.600}><path d="m4 8 8 8 8-8" /></Line>
        </TabSearch>
        <Tab>
          <GmailLogo width={14} />
          <TabTitle>Inbox (8,961) - 204g1a0558@srit.ac.in</TabTitle>
          <TabButton aria-label="Close tab"><Line size={12} w={3.200}><path d="m4 4 16 16M20 4 4 20" /></Line></TabButton>
        </Tab>
        <NewTab aria-label="New tab"><Line size={14} w={3}><path d="M12 3v18M3 12h18" /></Line></NewTab>
        <WindowControls>
          <WindowButton aria-label="Minimize"><Line size={12} w={2}><path d="M2 12h20" /></Line></WindowButton>
          <WindowButton aria-label="Restore">
            <Line size={12} w={2}><rect x="2" y="6" width="15" height="15" rx="3" /><path d="M6 3h11a4 4 0 0 1 4 4v11" /></Line>
          </WindowButton>
          <WindowButton aria-label="Close"><Line size={12} w={2}><path d="m2 2 20 20M22 2 2 22" /></Line></WindowButton>
        </WindowControls>
      </TabStrip>

      <AddressRow>
        <ChromeButton aria-label="Back" $w={28}><MdArrowBack size={18} /></ChromeButton>
        <ChromeButton aria-label="Forward" $w={44} $dim><MdArrowForward size={18} /></ChromeButton>
        <ChromeButton aria-label="Reload" $w={28}><Reload /></ChromeButton>
        <AddressBox>
          <SiteInfo aria-label="Site information"><SiteSettings /></SiteInfo>
          <Url>
            <b>mail.google.com</b>
            /mail/u/0/?tab=rm&amp;ogbl#inbox?compose=CllgCJNsLZhpMhSslgRRbvpsMCgqIZZSJTLPnptzpBrVjcXpLMLKBJljpSqnhZwlGpQXZtwDWsB
          </Url>
          <ChromeButton aria-label="Bookmark" $w={22}><MdStarBorder size={19} color="#5f6368" /></ChromeButton>
        </AddressBox>
        <ChromeButton aria-label="Extensions"><Puzzle /></ChromeButton>
        <Divider />
        <ChromeButton aria-label="Downloads"><Download /></ChromeButton>
        <ChromeButton aria-label="Profile"><Avatar $size={20}>M</Avatar></ChromeButton>
        <ChromeButton aria-label="Menu"><MdMoreVert size={20} /></ChromeButton>
      </AddressRow>

      <MailApp>
        <Rail>
          <RailItem href="#mail" $active>
            <RailChip $active><MailIcon /></RailChip>
            Mail
            <RailBadge>99+</RailBadge>
          </RailItem>
          <RailItem href="#chat"><RailChip><Chat /></RailChip>Chat</RailItem>
          <RailItem href="#meet"><RailChip><Meet /></RailChip>Meet</RailItem>
        </Rail>
        <Content>
          <TopBar>
            <Brand href="#home"><GmailLogo width={30} />Gmail</Brand>
            <SearchBox>
              <MdSearch size={24} />
              <input placeholder="Search in mail" aria-label="Search in mail" />
              <MdTune size={24} />
            </SearchBox>
            <StatusButton>Active<MdExpandMore size={16} /></StatusButton>
            <TopIcons>
              <IconButton aria-label="Support"><MdHelpOutline size={24} /></IconButton>
              <IconButton aria-label="Settings"><MdOutlineSettings size={24} /></IconButton>
              <IconButton aria-label="Google apps"><AppGrid /></IconButton>
            </TopIcons>
            <Account>
              <School>
                <SchoolName><span>SR</span><span>IT</span></SchoolName>
                Empowering Knowledge
              </School>
              <Avatar $size={32}>M</Avatar>
            </Account>
          </TopBar>
          <Columns>
            <Sidebar>
              <Compose><Pencil />Compose</Compose>
              <Folder href="#inbox" $active><InboxIcon />Inbox</Folder>
              <Folder href="#starred"><MdStarBorder size={20} />Starred</Folder>
              <Folder href="#snoozed"><MdAccessTime size={20} />Snoozed</Folder>
              <Folder href="#sent"><Sent />Sent</Folder>
              <Folder href="#drafts" $bold><Draft />Drafts</Folder>
              <Folder href="#more"><MdExpandMore size={20} />More</Folder>
              <LabelsTitle>Labels</LabelsTitle>
            </Sidebar>
            <ListPanel>
              <ListBar>
                <Range>1–50 of 10,036</Range>
                <IconButton aria-label="Newer"><MdChevronLeft size={20} color="#a0a0a0" /></IconButton>
                <IconButton aria-label="Older"><MdChevronRight size={20} color="#1f1f1f" /></IconButton>
              </ListBar>
              <ListBody>
                <MailTable>
                  <colgroup>
                    <col width="40" />
                    <col width="28" />
                    <col width="200" />
                    <col />
                    <col width="112" />
                  </colgroup>
                  <tbody>
                    {rows.map((r, i) => (
                      <MailRow key={i} $tall={r.tall}>
                        <More colSpan={4} $tall={r.tall}>{r.more}</More>
                        <Time $tall={r.tall}>{r.time}</Time>
                      </MailRow>
                    ))}
                    <MailRow>
                      <Cell><input type="checkbox" aria-label="Select LinkedIn" /></Cell>
                      <Cell><MdStarBorder size={18} /></Cell>
                      <Cell><b>LinkedIn</b></Cell>
                      <Cell>
                        <b>React JS - Intern role at Thence: The Product Success Company: Actively recruiting</b> - Your application
                      </Cell>
                      <Time>Apr 26</Time>
                    </MailRow>
                  </tbody>
                </MailTable>
                <ListThumb />
              </ListBody>
            </ListPanel>
          </Columns>
        </Content>
        <PanelToggle aria-label="Show side panel"><MdChevronLeft size={20} /></PanelToggle>

        <Scrim>
          <Dialog role="dialog" aria-label="Compose">
            <DialogHeader>
              <h1>FSE PROJECTFINAL DOCUMENT(Shaik Mohammad Faraz)</h1>
              <HeaderButtons>
                <IconButton $w={20} aria-label="Minimize"><Line size={14} w={4}><path d="M5 19h14" /></Line></IconButton>
                <IconButton $w={20} aria-label="Exit full screen"><Collapse /></IconButton>
                <IconButton $w={20} aria-label="Save and close"><MdClose size={16} /></IconButton>
              </HeaderButtons>
            </DialogHeader>
            <Fields>
              <Field><Recipient>apgtbphyd@gmail.com (gmail.com)</Recipient></Field>
              <Field><input aria-label="Subject" defaultValue="FSE PROJECTFINAL DOCUMENT(Shaik Mohammad Faraz)" /></Field>
              <Editor>
                <Message role="textbox" aria-label="Message body" tabIndex={0}>
                  {message.map((l, i) => (
                    <p key={i}>{l.bold ? <b>{l.text}</b> : l.text}</p>
                  ))}
                </Message>
                <EditorThumb />
                <FormatBar role="toolbar" aria-label="Formatting">
                  <Tool aria-label="Undo"><Undo /></Tool>
                  <Tool aria-label="Redo"><Redo /></Tool>
                  <Separator />
                  <FontPicker>
                    <select aria-label="Font"><option>Sans Serif</option></select>
                    <MdArrowDropDown size={18} />
                  </FontPicker>
                  <Separator />
                  <Tool $wide aria-label="Size"><TextSize /><MdArrowDropDown size={18} /></Tool>
                  <Separator />
                  <Tool aria-label="Bold"><MdFormatBold size={21} /></Tool>
                  <Tool aria-label="Italic"><MdFormatItalic size={21} /></Tool>
                  <Tool aria-label="Underline"><MdFormatUnderlined size={19} /></Tool>
                  <Tool $wide aria-label="Text colour"><MdFormatColorText size={19} /><MdArrowDropDown size={18} /></Tool>
                  <Separator />
                  <Tool $wide aria-label="Align"><MdFormatAlignLeft size={20} /><MdArrowDropDown size={18} /></Tool>
                  <Tool aria-label="Numbered list"><MdFormatListNumbered size={20} /></Tool>
                  <Tool aria-label="Bulleted list"><MdFormatListBulleted size={20} /></Tool>
                  <Tool aria-label="Indent less"><MdFormatIndentDecrease size={20} /></Tool>
                  <Tool aria-label="Indent more"><MdFormatIndentIncrease size={20} /></Tool>
                  <Tool aria-label="Quote"><MdFormatQuote size={24} /></Tool>
                  <Separator />
                  <Tool aria-label="Strikethrough"><MdStrikethroughS size={20} /></Tool>
                  <Separator />
                  <Tool aria-label="Remove formatting"><MdFormatClear size={20} /></Tool>
                </FormatBar>
              </Editor>
              <Footer>
                <SendGroup>
                  <SendButton $w={72}>Send</SendButton>
                  <SendButton $w={33} aria-label="More send options"><MdArrowDropDown size={20} /></SendButton>
                </SendGroup>
                <Tools>
                  <Tool aria-label="Writing assistant"><Burst /></Tool>
                  <Tool $on aria-label="Formatting options"><TextFormat /></Tool>
                  <Tool aria-label="Attach files"><AttachDoc /></Tool>
                  <Tool aria-label="Insert link"><MdInsertLink size={20} /></Tool>
                  <Tool aria-label="Insert emoji"><Smile /></Tool>
                  <Tool aria-label="Insert from Drive"><DriveMark /></Tool>
                  <Tool aria-label="Insert photo"><Picture /></Tool>
                  <Tool aria-label="Confidential mode"><LockClock /></Tool>
                  <Tool aria-label="Insert signature"><Pen /></Tool>
                  <Tool aria-label="Set up a time to meet"><Event /></Tool>
                  <Tool aria-label="More options"><MdMoreVert size={20} /></Tool>
                  <Tool aria-label="Discard draft"><Trash /></Tool>
                </Tools>
              </Footer>
            </Fields>
          </Dialog>
        </Scrim>
      </MailApp>

      <Taskbar>
        <Weather>
          <svg width="22" height="22" viewBox="0 0 22 22" aria-hidden>
            <defs>
              <linearGradient id="sun" x2=".7" y2="1">
                <stop offset="0" stopColor="#f3c13a" />
                <stop offset="1" stopColor="#f2660e" />
              </linearGradient>
            </defs>
            <circle cx="11" cy="11" r="10" fill="url(#sun)" />
          </svg>
          <Count $color="#c42b1c" $x={30} $y={-3}>1</Count>
          <span>41°C<small>Sunny</small></span>
        </Weather>
        <Apps>
          <AppButton aria-label="Start"><StartLogo /></AppButton>
          <TaskSearch><MdSearch size={18} />Search</TaskSearch>
          <AppButton aria-label="Task view"><TaskView /></AppButton>
          <AppButton aria-label="Chat"><TeamsChat /></AppButton>
          <AppButton aria-label="File Explorer" $open><Folders /></AppButton>
          <AppButton aria-label="Edge"><EdgeLogo /></AppButton>
          <AppButton aria-label="Store"><Store /></AppButton>
          <AppButton aria-label="WhatsApp" $open><WhatsApp /><Count $color="#0078d4" $x={20} $y={1}>3</Count></AppButton>
          <AppButton aria-label="Mail"><MailTile /></AppButton>
          <AppButton aria-label="Eclipse" $tile><Eclipse /></AppButton>
          <AppButton aria-label="Chrome" $tile $open>
            <Chrome />
            <ProfileBadge><Avatar $size={16}>M</Avatar></ProfileBadge>
          </AppButton>
        </Apps>
        <Tray>
          <Line size={14} w={2.200}><path d="m2 17 10-10 10 10" /></Line>
          <TrayText>ENG<br />IN</TrayText>
          <TrayIcons><Wifi /><Volume /><Battery /></TrayIcons>
          <TrayText $right>4:30 PM<br />4/27/2024</TrayText>
        </Tray>
      </Taskbar>

      <Tip role="tooltip">eclipse</Tip>
      <Watermark><strong>Activate Windows</strong>Go to Settings to activate Windows.</Watermark>
    </Screen>
  );
}
